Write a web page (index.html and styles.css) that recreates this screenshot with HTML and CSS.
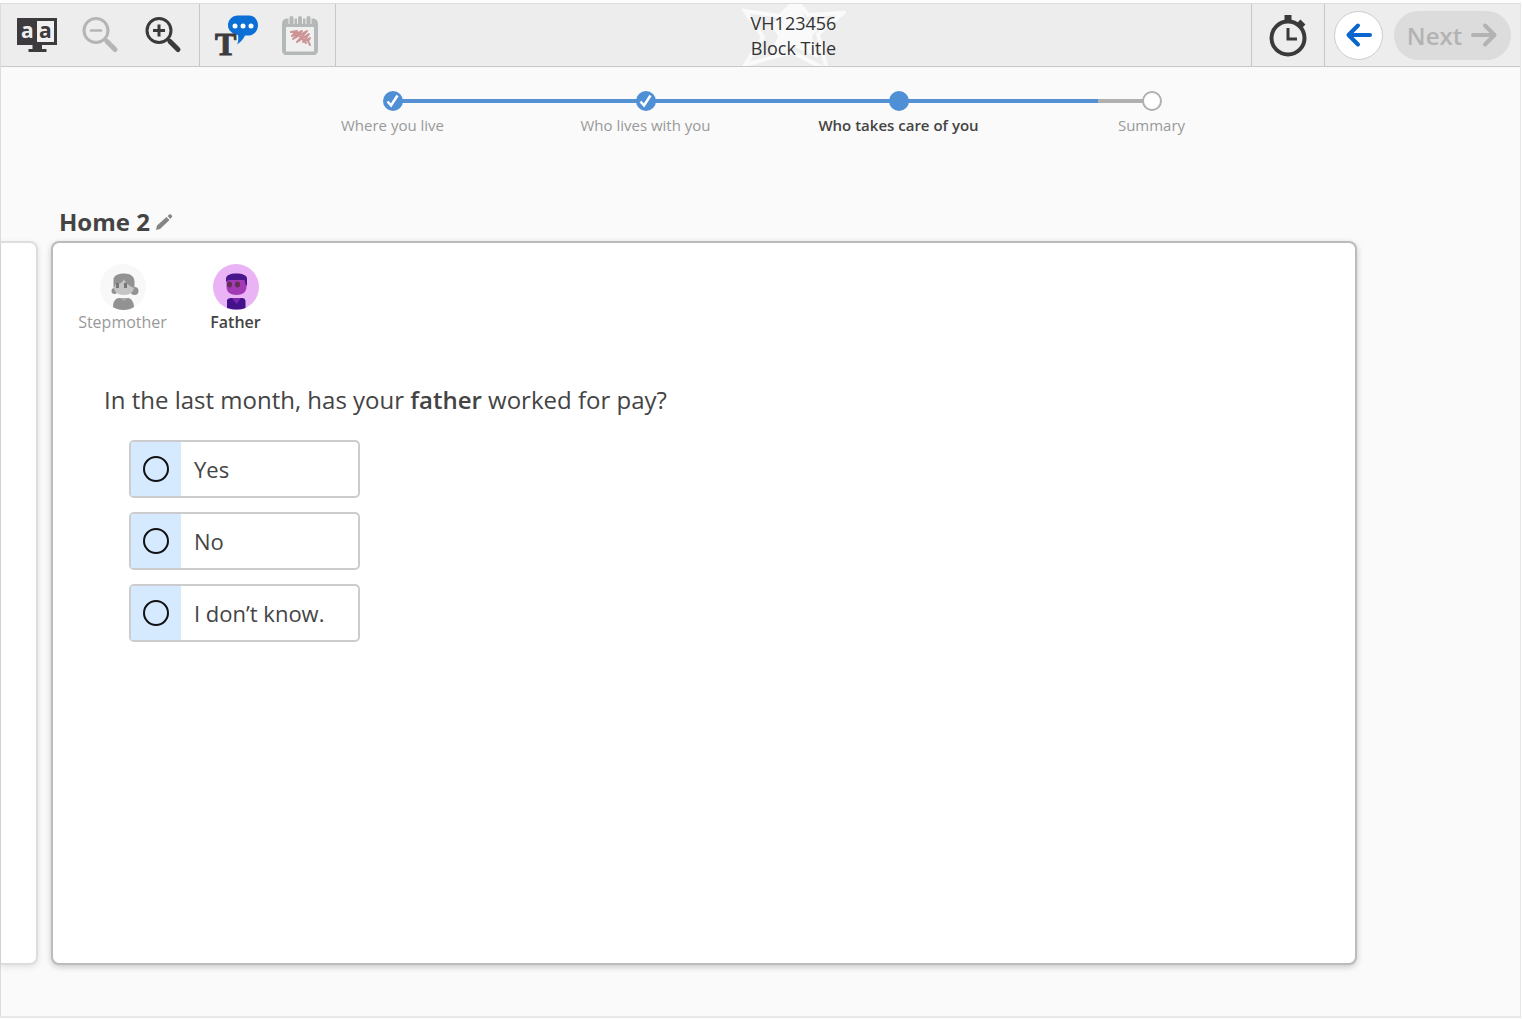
FILE: index.html
```html
<!DOCTYPE html>
<html lang="en">
<head>
<meta charset="utf-8">
<meta name="viewport" content="width=device-width, initial-scale=1">
<title>Block Title</title>
<link rel="stylesheet" href="styles.css">
</head>
<body>
<div class="app">
  <header class="toolbar">
    <div class="tools">
      <button class="tool" type="button" aria-label="Color theme">
        <svg width="42" height="40" viewBox="0 0 42 40">
          <path fill="#3d3b3e" d="M1 3h40v27H26v4h4.500v3h-18v-3h4v-4H1z"/>
          <path fill="#f1f1f1" d="M21 6h17v21H21z"/>
          <text class="glyph-sans" x="5" y="23" fill="#eee">a</text>
          <text class="glyph-sans" x="23" y="23" fill="#3d3b3e">a</text>
        </svg>
      </button>
      <button class="tool" type="button" aria-label="Zoom out" disabled>
        <svg width="42" height="40" viewBox="0 0 42 40" fill="none" stroke="#b5b5b5" stroke-linecap="round">
          <circle cx="17" cy="15.500" r="12" stroke-width="3"/>
          <path stroke-width="2.500" d="M12 15.500h10"/>
          <path stroke-width="5" d="M28 26.500l8 8"/>
          <path stroke-width="3" d="M25.500 24l3 3"/>
        </svg>
      </button>
      <button class="tool" type="button" aria-label="Zoom in">
        <svg width="42" height="40" viewBox="0 0 42 40" fill="none" stroke="#3a3a3a" stroke-linecap="round">
          <circle cx="17" cy="15.500" r="12" stroke-width="3"/>
          <path stroke-width="3" stroke-linecap="butt" d="M11 15.500h12M17 9.500v12"/>
          <path stroke-width="5" d="M28 26.500l8 8"/>
          <path stroke-width="3" d="M25.500 24l3 3"/>
        </svg>
      </button>
    </div>
    <div class="tools">
      <button class="tool" type="button" aria-label="Text to speech">
        <svg class="spill" width="42" height="40" viewBox="0 0 42 40">
          <path fill="#0b6fd6" d="M23 0.500h11c6 0 9 5 9 10s-4 10-9 10h-4c-2 4-4 6.500-8 9 1.500-3 1.500-6 1-9.500-6-1-10-5-10-9.500C13 5 17 0.500 23 0.500z"/>
          <circle cx="20" cy="11" r="2.500" fill="#fff"/><circle cx="28" cy="11" r="2.500" fill="#fff"/><circle cx="36" cy="11" r="2.500" fill="#fff"/>
          <text class="glyph-serif" x="0" y="40" fill="#3d3b3e" stroke="#3d3b3e">T</text>
        </svg>
      </button>
      <button class="tool" type="button" aria-label="Scratch pad" disabled>
        <svg width="42" height="40" viewBox="0 0 42 40" fill="none" stroke="#b5b8b8">
          <rect x="6" y="5.500" width="32" height="33" rx="3" fill="#f0f0f0" stroke-width="4"/>
          <path stroke-width="7" d="M6 8.500h32"/>
          <path stroke="#ededed" stroke-width="6" d="M13.500 0v9M22 0v9M30.500 0v9"/>
          <path stroke-width="4" stroke-linecap="round" d="M13.500 3v6M22 3v6M30.500 3v6"/>
          <path stroke="#cc9494" stroke-width="2" stroke-linecap="round" stroke-linejoin="round" d="M13 17l6-1-5 5 10-5-9 8 14-8-10 11 12-8-6 8 7-4-2 3 2 4M20 19l8 9"/>
        </svg>
      </button>
    </div>
    <div class="heading">
      <svg class="star" width="104" height="63" viewBox="0 0 104 63" fill="none" stroke="#fafafa" aria-hidden="true">
        <path stroke-width="4" d="M3 7l35 5L54-4l12 15 35-2-25 21 9 36-35-18L3 61l18-28z"/>
        <path fill="#fafafa" stroke="none" d="M40 14L55-4l10 22 22-4-17 18 6 22-23-11-25 9 8-20-8-12z"/>
      </svg>
      <h1 class="heading-text">VH123456<br>Block Title</h1>
    </div>
    <button class="timer" type="button" aria-label="Timer">
      <svg width="42" height="44" viewBox="0 0 42 44" fill="none" stroke="#3a3a3a">
        <circle cx="21" cy="25" r="16.500" stroke-width="4"/>
        <path stroke-width="7" d="M21 2v6"/>
        <path stroke-width="4" d="M31 14l4-4M32 8l5 5"/>
        <path stroke-width="3" d="M21 15v11h9"/>
      </svg>
    </button>
    <nav class="nav" aria-label="Pages">
      <button class="back" type="button" aria-label="Back">
        <svg width="28" height="28" viewBox="0 0 28 28" fill="none" stroke="#0a66cc" stroke-width="4" stroke-linecap="round" stroke-linejoin="round"><path d="M25 14H4M13 4.500L3.500 14l9.500 9.500"/></svg>
      </button>
      <button class="next" type="button" disabled>Next
        <svg width="28" height="28" viewBox="0 0 28 28" fill="none" stroke="#b3b3b3" stroke-width="4" stroke-linecap="round" stroke-linejoin="round"><path d="M3 14h21M15 4.500l9.500 9.500-9.500 9.500"/></svg>
      </button>
    </nav>
  </header>

  <div class="progress">
    <div class="track"><div class="track-fill" style="width:93%"></div></div>
    <ol class="steps">
      <li class="step"><span class="dot dot-done"><svg width="20" height="20" viewBox="0 0 20 20" fill="none" stroke="#fff" stroke-width="2.500"><path d="M4.500 10.500l3.500 4 6.500-10"/></svg></span>Where you live</li>
      <li class="step"><span class="dot dot-done"><svg width="20" height="20" viewBox="0 0 20 20" fill="none" stroke="#fff" stroke-width="2.500"><path d="M4.500 10.500l3.500 4 6.500-10"/></svg></span>Who lives with you</li>
      <li class="step step-current" aria-current="step"><span class="dot dot-done"></span>Who takes care of you</li>
      <li class="step"><span class="dot"></span>Summary</li>
    </ol>
  </div>

  <main class="homes">
    <div class="home-title">
      <h2 class="home-name">Home 2</h2>
      <button class="edit" type="button" aria-label="Rename home">
        <svg width="18" height="18" viewBox="0 0 18 18" fill="#858585"><path d="M1 17l1-4.500L11.500 4l3 3L5 16zM12.500 3l1.800-1.600q.7-.6 1.400 0l1.200 1.200q.6.700 0 1.400L15.500 6z"/></svg>
      </button>
    </div>
    <div class="card card-previous"></div>
    <section class="card card-current">
      <ul class="people">
        <li class="person">
          <svg width="46" height="46" viewBox="0 0 46 46" aria-hidden="true">
            <circle cx="23" cy="23" r="23" fill="#f8f8f8"/>
            <circle cx="34.500" cy="27" r="4" fill="#929292"/>
            <circle cx="14.500" cy="27" r="3" fill="#929292"/>
            <path fill="#c4c4c4" d="M14 15h20v8c0 5-4 8-10 8s-10-3-10-8z"/>
            <path fill="#929292" d="M13.500 24v-9c1-4 5-5.500 11-5.500s10 3 10 8V24c-3-1-9-4-10.500-9-1 3-4 5-8 5-1 0-1 3-2.500 4z"/>
            <path fill="#777" d="M16 19h3v5h-3zM24 19h3v5h-3z"/>
            <path fill="#929292" d="M13 43c0-6 3-9 6-9h9c3 0 6 4 6 9-5 4-16 4-21 0z"/>
            <path fill="#aaa" d="M20 34h8l-4 3z"/>
          </svg>
          Stepmother
        </li>
        <li class="person person-current">
          <svg width="46" height="46" viewBox="0 0 46 46" aria-hidden="true">
            <circle cx="23" cy="23" r="23" fill="#e9b3f5"/>
            <path fill="#a23ab6" d="M13.500 14h20v9c0 5-4 8-10 8s-10-3-10-8z"/>
            <path fill="#4a168c" d="M13 18v-4c1-3 4-4.500 10-4.500 7 0 11 2 11 5V22c-1.500-1-2-3-2.500-6H16c-1 0-2 1-3 2z"/>
            <ellipse cx="16.500" cy="20.500" rx="2.500" ry="3" fill="#633052"/><ellipse cx="24.500" cy="20.500" rx="2.500" ry="3" fill="#633052"/>
            <path fill="#43128a" d="M14 44V36q1-2 4-2h11q3 0 3.500 3V44q-8 3-18.500 0z"/>
            <path fill="#7c26ae" d="M19 34h9l-4.500 6z"/>
          </svg>
          Father
        </li>
      </ul>
      <fieldset class="question">
        <legend class="prompt">In the last month, has your <strong>father</strong> worked for pay?</legend>
        <div class="options">
          <label class="option"><span class="option-mark"><input class="radio" type="radio" name="worked" value="yes"></span>Yes</label>
          <label class="option"><span class="option-mark"><input class="radio" type="radio" name="worked" value="no"></span>No</label>
          <label class="option"><span class="option-mark"><input class="radio" type="radio" name="worked" value="unknown"></span>I don’t know.</label>
        </div>
      </fieldset>
    </section>
  </main>
</div>
</body>
</html>
```
FILE: styles.css
```css
*, *::before, *::after { box-sizing: border-box; }

body {
  margin: 0;
  padding: 3px 1px 1px 0;
  min-height: 100vh;
  display: flex;
  background: #fdfdfd;
  color: #444;
  font-family: "Open Sans", "Noto Sans", sans-serif;
}

button {
  padding: 0;
  border: 0;
  background: none;
  font: inherit;
  color: inherit;
}

svg { display: block; flex: none; }
ol, ul { margin: 0; padding: 0; list-style: none; }
strong { font-weight: 600; }

.app {
  flex: 1;
  min-width: 0;
  display: flex;
  flex-direction: column;
  border: 1px solid #dcdcdc;
  border-right-color: #e6e6e6;
  border-bottom: 2px solid #e8e8e8;
  background: #fafafa;
}

/* Toolbar */
.toolbar {
  display: flex;
  height: 63px;
  border-bottom: 1px solid #c8c8c8;
  background: #ededed;
}

.tools {
  display: flex;
  align-items: center;
  gap: 21px;
  padding: 0 15px;
  border-right: 1px solid #c8c8c8;
}

.tool { width: 42px; }
.spill { overflow: visible; }
.glyph-sans { font: bold 21px "Open Sans", sans-serif; }
.glyph-serif { font: bold 32px "Liberation Serif", serif; }

.heading {
  position: relative;
  flex: 1;
  display: flex;
  align-items: center;
  justify-content: center;
  padding-top: 2px;
  overflow: hidden;
}

.star { position: absolute; top: 0; left: calc(50% - 52px); }

.heading-text {
  position: relative;
  margin: 0;
  color: #333;
  font-size: 18px;
  font-weight: 400;
  line-height: 25px;
  text-align: center;
}

.timer {
  width: 73px;
  display: flex;
  align-items: center;
  justify-content: center;
  border-left: 1px solid #c8c8c8;
}

.nav {
  display: flex;
  align-items: center;
  gap: 11px;
  padding: 0 9px;
  border-left: 1px solid #c8c8c8;
}

.back {
  width: 49px;
  height: 49px;
  display: flex;
  align-items: center;
  justify-content: center;
  border: 1px solid #ccc;
  border-radius: 50%;
  background: #fff;
}

.next {
  width: 117px;
  height: 49px;
  display: flex;
  align-items: center;
  justify-content: center;
  gap: 8px;
  border-radius: 25px;
  background: #dcdcdc;
  color: #b3b3b3;
  font-size: 24px;
  font-weight: 600;
}

/* Progress */
.progress {
  position: relative;
  margin: 24px 242px 0 265px;
}

.track {
  position: absolute;
  top: 8px;
  left: 12.5%;
  right: 12.5%;
  height: 4px;
  background: #b0b0b0;
}

.track-fill { height: 100%; background: #5591d2; }

.steps {
  position: relative;
  display: grid;
  grid-template-columns: repeat(4, 1fr);
}

.step {
  display: flex;
  flex-direction: column;
  align-items: center;
  gap: 4px;
  color: #999;
  font-size: 15px;
  line-height: 20px;
}

.step-current { color: #444; font-weight: 600; }

.dot {
  width: 20px;
  height: 20px;
  border: 2px solid #b0b0b0;
  border-radius: 50%;
  background: #fff;
}

.dot-done { border: 0; background: #4f8fd6; }

/* Homes */
.homes {
  flex: 1;
  display: grid;
  grid-template: auto 1fr / 37px 1fr;
  column-gap: 13px;
  padding: 70px 163px 51px 0;
}

.home-title {
  grid-column: 2;
  display: flex;
  align-items: center;
  gap: 5px;
  padding: 0 0 2px 8px;
}

.home-name {
  margin: 0;
  font-size: 24px;
  line-height: 34px;
}

.card {
  border: 2px solid #bbb;
  border-radius: 8px;
  background: #fff;
  box-shadow: 0 2px 6px rgba(0, 0, 0, .2);
}

.card-previous {
  border-color: #ddd;
  border-left: 0;
  border-radius: 0 8px 8px 0;
  box-shadow: 0 2px 6px rgba(0, 0, 0, .1);
}

.card-current { padding: 21px 13px; }

.people { display: flex; }

.person {
  width: 113px;
  display: flex;
  flex-direction: column;
  align-items: center;
  gap: 2px;
  color: #999;
  font-size: 16px;
  line-height: 20px;
}

.person-current { color: #444; font-weight: 600; }

.question {
  margin: 50px 0 0;
  padding: 0 0 0 38px;
  border: 0;
  min-width: 0;
}

.prompt {
  padding: 0;
  font-size: 24px;
  line-height: 36px;
}

.options {
  display: flex;
  flex-direction: column;
  gap: 14px;
  padding: 22px 0 0 25px;
}

.option {
  width: 231px;
  height: 58px;
  display: flex;
  align-items: center;
  gap: 13px;
  border: 2px solid #ccc;
  border-radius: 5px;
  font-size: 22px;
}

.option-mark {
  width: 50px;
  height: 100%;
  display: flex;
  align-items: center;
  justify-content: center;
  background: #d6eaff;
}

.radio {
  appearance: none;
  width: 26px;
  height: 26px;
  margin: 0;
  border: 2px solid #111;
  border-radius: 50%;
}

.radio:checked { box-shadow: inset 0 0 0 5px #d6eaff; background: #111; }
```
